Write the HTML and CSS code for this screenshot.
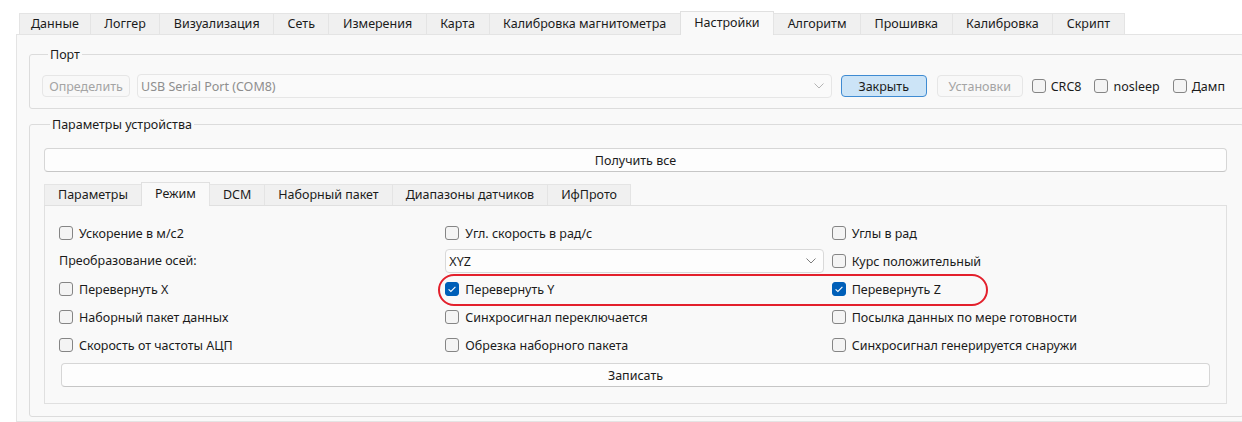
FILE: index.html
```html
<!DOCTYPE html>
<html lang="ru">
<head>
<meta charset="utf-8">
<title>Настройки</title>
<link rel="stylesheet" href="styles.css">
</head>
<body>
<div class="window">
  <div class="tabbar main">
    <div class="tab first">Данные</div>
    <div class="tab">Логгер</div>
    <div class="tab">Визуализация</div>
    <div class="tab">Сеть</div>
    <div class="tab">Измерения</div>
    <div class="tab">Карта</div>
    <div class="tab">Калибровка магнитометра</div>
    <div class="tab active">Настройки</div>
    <div class="tab">Алгоритм</div>
    <div class="tab">Прошивка</div>
    <div class="tab">Калибровка</div>
    <div class="tab">Скрипт</div>
  </div>

  <div class="pane">
    <div class="group port">
      <div class="group-title">Порт</div>
      <div class="port-row">
        <button class="btn small disabled detect">Определить</button>
        <div class="combo disabled port-combo">
          <span class="combo-text">USB Serial Port (COM8)</span>
          <svg class="chevron" width="10" height="6" viewBox="0 0 10 6"><polyline points="0.5,0.5 5,5 9.5,0.5"/></svg>
        </div>
        <button class="btn small primary close">Закрыть</button>
        <button class="btn small disabled setup">Установки</button>
        <label class="check inline crc"><span class="box"></span>CRC8</label>
        <label class="check inline nosleep"><span class="box"></span>nosleep</label>
        <label class="check inline dump"><span class="box"></span>Дамп</label>
      </div>
    </div>

    <div class="group device">
      <div class="group-title">Параметры устройства</div>
      <button class="btn wide fetch">Получить все</button>

      <div class="tabbar sub">
        <div class="tab">Параметры</div>
        <div class="tab active">Режим</div>
        <div class="tab">DCM</div>
        <div class="tab">Наборный пакет</div>
        <div class="tab">Диапазоны датчиков</div>
        <div class="tab">ИфПрото</div>
      </div>

      <div class="subpane">
        <div class="grid">
          <label class="check"><span class="box"></span>Ускорение в м/с2</label>
          <label class="check"><span class="box"></span>Угл. скорость в рад/с</label>
          <label class="check"><span class="box"></span>Углы в рад</label>

          <div class="plain">Преобразование осей:</div>
          <div class="combo axes">
            <span class="combo-text">XYZ</span>
            <svg class="chevron" width="10" height="6" viewBox="0 0 10 6"><polyline points="0.5,0.5 5,5 9.5,0.5"/></svg>
          </div>
          <label class="check"><span class="box"></span>Курс положительный</label>

          <label class="check"><span class="box"></span>Перевернуть X</label>
          <label class="check"><span class="box on"><svg width="14" height="14" viewBox="0 0 14 14"><polyline points="3.6,7.3 5.9,9.5 10.4,4.8"/></svg></span>Перевернуть Y</label>
          <label class="check"><span class="box on"><svg width="14" height="14" viewBox="0 0 14 14"><polyline points="3.6,7.3 5.9,9.5 10.4,4.8"/></svg></span>Перевернуть Z</label>

          <label class="check"><span class="box"></span>Наборный пакет данных</label>
          <label class="check"><span class="box"></span>Синхросигнал переключается</label>
          <label class="check"><span class="box"></span>Посылка данных по мере готовности</label>

          <label class="check"><span class="box"></span>Скорость от частоты АЦП</label>
          <label class="check"><span class="box"></span>Обрезка наборного пакета</label>
          <label class="check"><span class="box"></span>Синхросигнал генерируется снаружи</label>
        </div>
        <button class="btn wide write">Записать</button>
        <div class="highlight"></div>
      </div>
    </div>
  </div>
</div>
</body>
</html>
```

FILE: styles.css
```css
* {
  box-sizing: border-box;
}

html,
body {
  margin: 0;
  padding: 0;
  overflow: hidden;
  background: #ffffff;
}

body {
  width: 1242px;
  height: 422px;
  font-family: "Noto Sans", "Open Sans", sans-serif;
  font-size: 12.5px;
  color: #1b1b1b;
}

.window {
  width: 1300px;
  padding-top: 13px;
}

/* ---- tab bars ---- */
.tabbar {
  display: flex;
  align-items: flex-end;
  height: 21px;
  margin-left: 19px;
  position: relative;
  z-index: 1;
}

.tab {
  height: 21px;
  line-height: 20px;
  padding: 0 13px;
  background: #f0f0f0;
  border: 1px solid #e4e4e4;
  border-bottom: none;
  margin-right: -1px;
  white-space: nowrap;
}

.tabbar.main .tab {
  padding: 0 13.5px;
}

.tabbar.main .tab.first {
  padding: 0 11px;
}

.tab.active {
  height: 24px;
  margin-bottom: -1px;
  line-height: 21px;
  background: #f9f9f9;
  border-color: #e0e0e0;
}

.tabbar.sub {
  margin: 12px 0 0 0;
}

/* ---- main pane ---- */
.pane {
  margin-left: 16px;
  width: 1241px;
  height: 388px;
  padding: 19px 12px 0;
  background: #f9f9f9;
  border: 1px solid #e4e4e4;
}

.group {
  border: 1px solid #dcdcdc;
  border-radius: 3px;
}

.group-title {
  display: table;
  margin: -8px 0 0 6px;
  padding: 0 2px;
  line-height: 16px;
  background: #f9f9f9;
}

.group.port {
  padding: 0 18px 10px 12px;
}

.group.device {
  margin-top: 15px;
  padding: 0 16px 12px 14px;
}

/* ---- controls ---- */
.btn {
  display: flex;
  align-items: center;
  justify-content: center;
  height: 24px;
  padding: 0;
  font: inherit;
  color: #1b1b1b;
  background: #fdfdfd;
  border: 1px solid #d6d6d6;
  border-bottom-color: #c6c6c6;
  border-radius: 4px;
}

.btn.small {
  height: 22px;
}

.btn.disabled {
  color: #a4a4a4;
  background: #f8f8f8;
  border-color: #e6e6e6;
}

.btn.primary {
  background: #cce4f7;
  border-color: #3f8bd2;
}

.btn.wide {
  width: 100%;
}

.btn.fetch {
  margin-top: 15px;
}

.btn.write {
  margin: 4px 0 0 2px;
  width: calc(100% - 2px);
}

.combo {
  display: flex;
  align-items: center;
  height: 24px;
  padding: 0 7px 0 3px;
  background: #fdfdfd;
  border: 1px solid #d9d9d9;
  border-radius: 4px;
}

.combo.disabled {
  background: #fafafa;
  border-color: #e6e6e6;
  color: #8e8e8e;
}

.combo-text {
  flex: 1;
  white-space: nowrap;
}

.chevron polyline {
  fill: none;
  stroke: #7c7c7c;
  stroke-width: 1;
}

.combo.disabled .chevron polyline {
  stroke: #b4b4b4;
}

.check {
  display: flex;
  align-items: center;
  gap: 6px;
  height: 28px;
  white-space: nowrap;
}

.box {
  flex: none;
  width: 14px;
  height: 14px;
  border: 1px solid #858585;
  border-radius: 3px;
  background: #f4f4f4;
}

.box.on {
  background: #005fb8;
  border-color: #005fb8;
}

.box.on svg {
  display: block;
  margin: -1px;
}

.box.on polyline {
  fill: none;
  stroke: #ffffff;
  stroke-width: 1.1;
}

/* ---- port row ---- */
.port-row {
  display: flex;
  align-items: center;
  height: 24px;
  margin-top: 11px;
}

.detect {
  width: 88px;
  flex: none;
}

.port-combo {
  flex: 1;
  margin-left: 7px;
}

.close {
  width: 86px;
  flex: none;
  margin-left: 9px;
}

.setup {
  width: 86px;
  flex: none;
  margin-left: 10px;
}

.check.inline {
  height: 24px;
  gap: 5px;
}

.check.crc {
  margin-left: 9px;
}

.check.nosleep,
.check.dump {
  margin-left: 13px;
}

/* ---- sub tab page ---- */
.subpane {
  position: relative;
  padding: 13px 16px 16px 14px;
  background: #f9f9f9;
  border: 1px solid #e0e0e0;
}

.grid {
  display: grid;
  grid-template-columns: 1fr 1fr 1fr;
  grid-auto-rows: 28px;
  column-gap: 8px;
  align-items: center;
}

.plain {
  line-height: 28px;
}

.combo.axes {
  height: 24px;
}

/* red outline around the axis flip options */
.highlight {
  position: absolute;
  left: 393px;
  top: 68px;
  width: 550px;
  height: 32px;
  border: 2px solid #e3202c;
  border-radius: 16px;
  pointer-events: none;
}
```
